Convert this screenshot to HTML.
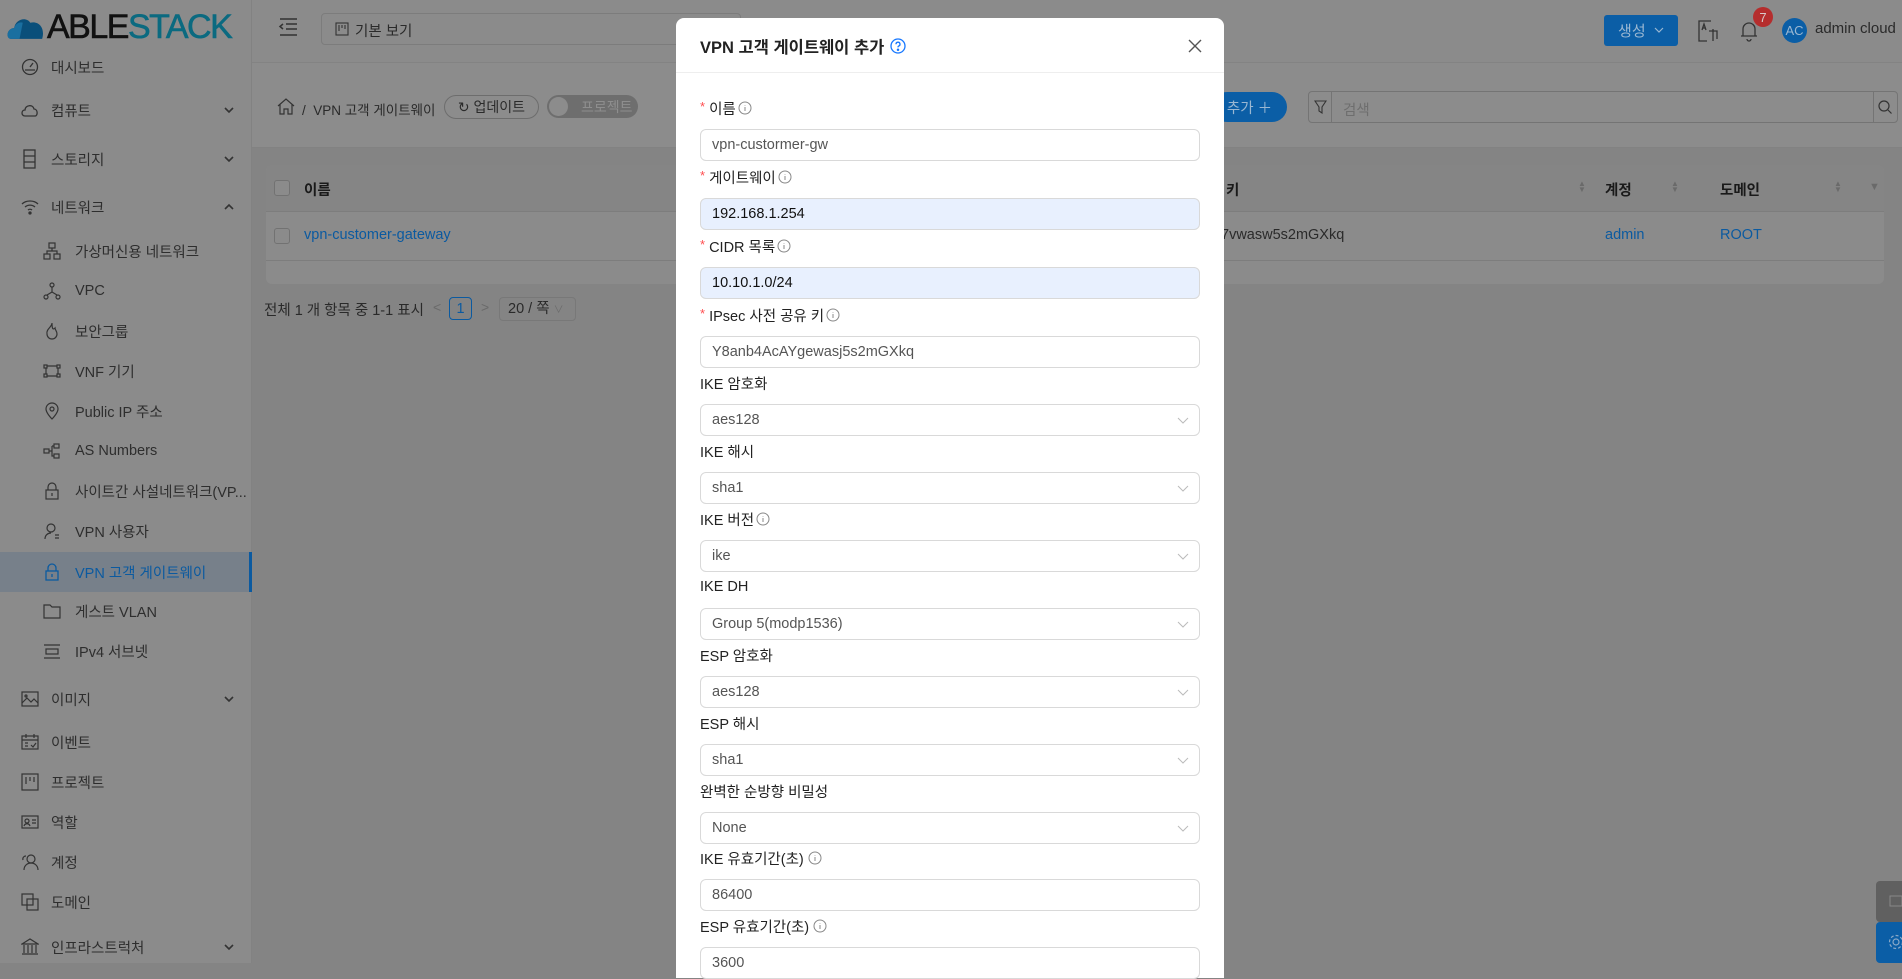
<!DOCTYPE html>
<html><head><meta charset="utf-8">
<style>
*{box-sizing:border-box;margin:0;padding:0}
body{width:1902px;height:963px;overflow:hidden;position:relative;background:#848484;font-family:"Liberation Sans","Noto Sans CJK KR",sans-serif;font-size:14px;color:#262626}
.abs{position:absolute}
#side{left:0;top:0;width:252px;height:963px;background:#8b8b8b;border-right:1px solid #828282}
.mi{position:absolute;left:0;width:252px;height:40px;display:flex;align-items:center;color:#2e2e2e;font-size:14.5px}
.mi svg{position:absolute}
.top svg{left:21px}
.top span{position:absolute;left:51px}
.sub svg{left:43px}
.sub span{position:absolute;left:75px}
.mi svg.chev{left:224px}
#hdr{left:252px;top:0;width:1650px;height:63px;background:#8b8b8b;border-bottom:1px solid #838383}
#bc{left:252px;top:63px;width:1650px;height:85px;background:#8c8c8c;border-bottom:1px solid #828282}
#card{left:266px;top:165px;width:1618px;height:119px;background:#8b8b8b;border-radius:6px}
.modal{left:676px;top:18px;width:548px;height:960px;background:#fff;border-radius:8px 8px 0 0}
.lbl{position:absolute;left:24px;font-size:14.5px;color:#222;display:flex;align-items:center;height:20px}
.req{color:#ff4d4f;margin-right:4px;font-size:13px;position:relative;top:-2px}
.inp{position:absolute;left:24px;width:500px;height:32px;border:1px solid #d9d9d9;border-radius:6px;padding-left:11px;display:flex;align-items:center;font-size:14.5px;color:#555}
.inp.af{background:#e8f0fe;color:#111}
.inp .ar{position:absolute;right:10px;top:9px}
.info{margin-left:2px}
</style></head><body>

<div id="side" class="abs">
 <div class="abs" style="left:6px;top:10px;display:flex;align-items:center">
  <svg width="40" height="28" viewBox="0 0 36 26"><path d="M4 24 C-1 24 0 14 7 14 C8 6 18 3 22 9 C30 7 36 14 33 24 Z" fill="#0a4f7a"/><path d="M4 24 C-1 24 0 14 7 14 C8 10 12 8 15 9 L12 24Z" fill="#1a6fa0"/></svg>
  <span style="font-size:34px;letter-spacing:-1.5px;color:#111;margin-left:1px;line-height:1;-webkit-text-stroke:0.6px #111">ABLE</span><span style="font-size:34px;letter-spacing:-1.5px;color:#0b6a80;line-height:1;-webkit-text-stroke:0.6px #0b6a80">STACK</span>
 </div>
 <div class="mi top" style="top:47px"><svg width="18" height="18" viewBox="0 0 18 18" fill="none" stroke="#333" stroke-width="1.3"><circle cx="9" cy="9" r="7.5"/><path d="M9 9l3-4M4 12h10"/></svg><span>대시보드</span></div>
 <div class="mi top" style="top:90px"><svg width="18" height="18" viewBox="0 0 18 18" fill="none" stroke="#333" stroke-width="1.3"><path d="M4 15C0 15 0 9 4 9 4 4 12 3 13 8 17 8 17 15 14 15Z"/></svg><span>컴퓨트</span><svg class="chev" width="10" height="8" viewBox="0 0 10 8" fill="none" stroke="#333" stroke-width="1.6"><path d="M1 2l4 4 4-4"/></svg></div>
 <div class="mi top" style="top:139px"><svg width="18" height="20" viewBox="0 0 18 20" fill="none" stroke="#333" stroke-width="1.3"><rect x="3" y="1" width="11" height="18"/><path d="M3 7h11M3 13h11"/></svg><span>스토리지</span><svg class="chev" width="10" height="8" viewBox="0 0 10 8" fill="none" stroke="#333" stroke-width="1.6"><path d="M1 2l4 4 4-4"/></svg></div>
 <div class="mi top" style="top:187px"><svg width="18" height="18" viewBox="0 0 18 18" fill="none" stroke="#333" stroke-width="1.3"><path d="M1 6c4-4 12-4 16 0M4 9c3-2.5 7-2.5 10 0M7 12c1-1 3-1 4 0"/><circle cx="9" cy="15" r="1" fill="#333"/></svg><span>네트워크</span><svg class="chev" width="10" height="8" viewBox="0 0 10 8" fill="none" stroke="#333" stroke-width="1.6"><path d="M1 6l4-4 4 4"/></svg></div>
 <div class="mi sub" style="top:231px"><svg width="18" height="18" viewBox="0 0 18 18" fill="none" stroke="#333" stroke-width="1.2"><rect x="6" y="1" width="6" height="5"/><rect x="1" y="12" width="6" height="5"/><rect x="11" y="12" width="6" height="5"/><path d="M9 6v3M4 12V9h10v3"/></svg><span>가상머신용 네트워크</span></div>
 <div class="mi sub" style="top:271px"><svg width="18" height="18" viewBox="0 0 18 18" fill="none" stroke="#333" stroke-width="1.2"><circle cx="9" cy="3" r="2"/><circle cx="3" cy="15" r="2"/><circle cx="15" cy="15" r="2"/><path d="M9 5v5L4 13M9 10l5 3"/></svg><span>VPC</span></div>
 <div class="mi sub" style="top:311px"><svg width="18" height="18" viewBox="0 0 18 18" fill="none" stroke="#333" stroke-width="1.2"><path d="M9 1c0 4-6 6-5 11a5 5 0 0 0 10 0c0-3-2-4-2-6-2 2-3 1-3-5z"/></svg><span>보안그룹</span></div>
 <div class="mi sub" style="top:351px"><svg width="18" height="18" viewBox="0 0 18 18" fill="none" stroke="#333" stroke-width="1.2"><rect x="1" y="3" width="3" height="3"/><rect x="14" y="3" width="3" height="3"/><rect x="1" y="12" width="3" height="3"/><rect x="14" y="12" width="3" height="3"/><path d="M4 4h10M4 14h10M3 6v6M15 6v6"/></svg><span>VNF 기기</span></div>
 <div class="mi sub" style="top:391px"><svg width="18" height="18" viewBox="0 0 18 18" fill="none" stroke="#333" stroke-width="1.2"><path d="M9 17s6-6 6-10A6 6 0 0 0 3 7c0 4 6 10 6 10z"/><circle cx="9" cy="7" r="2"/></svg><span>Public IP 주소</span></div>
 <div class="mi sub" style="top:431px"><svg width="18" height="18" viewBox="0 0 18 18" fill="none" stroke="#333" stroke-width="1.2"><rect x="1" y="7" width="5" height="4"/><rect x="11" y="2" width="5" height="4"/><rect x="11" y="12" width="5" height="4"/><path d="M6 9h3M9 4v10h2M9 4h2"/></svg><span>AS Numbers</span></div>
 <div class="mi sub" style="top:471px"><svg width="18" height="18" viewBox="0 0 18 18" fill="none" stroke="#333" stroke-width="1.2"><rect x="3" y="8" width="12" height="9"/><path d="M5 8V5a4 4 0 0 1 8 0v3M9 11v3"/></svg><span>사이트간 사설네트워크(VP...</span></div>
 <div class="mi sub" style="top:511px"><svg width="18" height="18" viewBox="0 0 18 18" fill="none" stroke="#333" stroke-width="1.2"><circle cx="8" cy="6" r="4"/><path d="M2 17c0-4 3-6 6-6M12 13h4M12 16h4"/></svg><span>VPN 사용자</span></div>
 <div class="mi sub" style="top:552px;background:#77808a;border-right:3px solid #0b5aa0;color:#0b5aa0"><svg width="18" height="18" viewBox="0 0 18 18" fill="none" stroke="#0b5aa0" stroke-width="1.3"><rect x="3" y="8" width="12" height="9"/><path d="M5 8V5a4 4 0 0 1 8 0v3M9 11v3"/></svg><span>VPN 고객 게이트웨이</span></div>
 <div class="mi sub" style="top:591px"><svg width="18" height="18" viewBox="0 0 18 18" fill="none" stroke="#333" stroke-width="1.2"><path d="M1 3h6l2 2h8v11H1z"/></svg><span>게스트 VLAN</span></div>
 <div class="mi sub" style="top:631px"><svg width="18" height="18" viewBox="0 0 18 18" fill="none" stroke="#333" stroke-width="1.2"><path d="M1 3h16M1 16h16"/><rect x="3" y="7" width="12" height="5"/></svg><span>IPv4 서브넷</span></div>
 <div class="mi top" style="top:679px"><svg width="18" height="18" viewBox="0 0 18 18" fill="none" stroke="#333" stroke-width="1.2"><rect x="1" y="2" width="16" height="14"/><path d="M1 13l5-5 4 4 3-3 4 4"/><circle cx="5" cy="6" r="1"/></svg><span>이미지</span><svg class="chev" width="10" height="8" viewBox="0 0 10 8" fill="none" stroke="#333" stroke-width="1.6"><path d="M1 2l4 4 4-4"/></svg></div>
 <div class="mi top" style="top:722px"><svg width="18" height="18" viewBox="0 0 18 18" fill="none" stroke="#333" stroke-width="1.2"><rect x="1" y="3" width="16" height="13"/><path d="M1 7h16M5 1v4M13 1v4M4 10h3M4 13h3M10 12l2 2 3-4"/></svg><span>이벤트</span></div>
 <div class="mi top" style="top:762px"><svg width="18" height="18" viewBox="0 0 18 18" fill="none" stroke="#333" stroke-width="1.2"><rect x="1" y="1" width="16" height="16"/><path d="M5 4v7M9 4v4M13 4v5"/></svg><span>프로젝트</span></div>
 <div class="mi top" style="top:802px"><svg width="18" height="18" viewBox="0 0 18 18" fill="none" stroke="#333" stroke-width="1.2"><rect x="1" y="3" width="16" height="12"/><circle cx="6" cy="8" r="2"/><path d="M3 13c1-3 5-3 6 0M11 7h4M11 10h4"/></svg><span>역할</span></div>
 <div class="mi top" style="top:842px"><svg width="18" height="18" viewBox="0 0 18 18" fill="none" stroke="#333" stroke-width="1.2"><circle cx="10" cy="6" r="4"/><path d="M3 17c0-4 3-7 7-7s7 3 7 7M5 3a3 3 0 0 0-3 4"/></svg><span>계정</span></div>
 <div class="mi top" style="top:882px"><svg width="18" height="18" viewBox="0 0 18 18" fill="none" stroke="#333" stroke-width="1.2"><rect x="1" y="1" width="11" height="11"/><rect x="6" y="6" width="11" height="11"/></svg><span>도메인</span></div>
 <div class="mi top" style="top:927px"><svg width="18" height="18" viewBox="0 0 18 18" fill="none" stroke="#333" stroke-width="1.2"><path d="M1 6L9 1l8 5zM3 7v8M7 7v8M11 7v8M15 7v8M1 16h16"/></svg><span>인프라스트럭처</span><svg class="chev" width="10" height="8" viewBox="0 0 10 8" fill="none" stroke="#333" stroke-width="1.6"><path d="M1 2l4 4 4-4"/></svg></div>
</div>

<div id="hdr" class="abs">
 <svg class="abs" style="left:26px;top:18px" width="20" height="18" viewBox="0 0 20 18" fill="none" stroke="#333" stroke-width="1.5"><path d="M2 1h17M8 6h11M8 11h11M2 17h17M5 6L2 8.5 5 11"/></svg>
 <div class="abs" style="left:69px;top:13px;width:420px;height:32px;border:1px solid #7c7c7c;border-radius:4px"></div>
 <svg class="abs" style="left:83px;top:22px" width="14" height="14" viewBox="0 0 14 14" fill="none" stroke="#333" stroke-width="1.1"><rect x="1" y="1" width="12" height="12"/><path d="M4 3v6M7 3v3M10 3v4"/></svg>
 <span class="abs" style="left:103px;top:20px;font-size:14.5px;color:#2a2a2a">기본 보기</span>
 <div class="abs" style="left:1352px;top:15px;width:74px;height:31px;background:#0b5ea6;border-radius:3px;color:#9ab7d2;font-size:15px;display:flex;align-items:center;justify-content:center">생성 &nbsp;<svg width="10" height="7" viewBox="0 0 10 7" fill="none" stroke="#9ab7d2" stroke-width="1.2"><path d="M1 1l4 4 4-4"/></svg></div>
 <svg class="abs" style="left:1446px;top:20px" width="20" height="22" viewBox="0 0 20 22" fill="none" stroke="#333" stroke-width="1.3"><path d="M13 1H1v20h8"/><path d="M4 10l2-6 2 6M5 8h2"/><path d="M11 11h8v8M15 9v12"/></svg>
 <svg class="abs" style="left:1488px;top:20px" width="18" height="22" viewBox="0 0 18 22" fill="none" stroke="#333" stroke-width="1.3"><path d="M3 16V9a6 6 0 0 1 12 0v7H1h16M7 19a2 2 0 0 0 4 0"/></svg>
 <div class="abs" style="left:1501px;top:7px;width:20px;height:20px;border-radius:50%;background:#b52d2d;color:#d8c8c8;font-size:13px;display:flex;align-items:center;justify-content:center">7</div>
 <div class="abs" style="left:1530px;top:18px;width:25px;height:25px;border-radius:50%;background:#0b5ea6;color:#9ab7d2;font-size:13px;display:flex;align-items:center;justify-content:center">AC</div>
 <span class="abs" style="left:1563px;top:20px;font-size:15px;color:#2a2a2a">admin cloud</span>
</div>

<div id="bc" class="abs">
 <svg class="abs" style="left:25px;top:35px" width="18" height="17" viewBox="0 0 18 17" fill="none" stroke="#333" stroke-width="1.2"><path d="M1 8L9 1l8 7M3 6v10h4v-5h4v5h4V6"/></svg>
 <span class="abs" style="left:50px;top:36px;font-size:13.5px;color:#2a2a2a">/&nbsp;&nbsp;VPN 고객 게이트웨이</span>
 <div class="abs" style="left:192px;top:32px;width:95px;height:24px;border:1px solid #6d6d6d;border-radius:12px;font-size:14px;color:#2a2a2a;display:flex;align-items:center;justify-content:center">&#8635;&nbsp;업데이트</div>
 <div class="abs" style="left:295px;top:32px;width:91px;height:23px;border-radius:12px;background:#6e6e6e;font-size:14px;color:#8e8e8e;display:flex;align-items:center;padding-left:34px">프로젝트<div class="abs" style="left:2px;top:2px;width:19px;height:19px;border-radius:50%;background:#8c8c8c"></div></div>
 <div class="abs" style="left:960px;top:29px;width:75px;height:30px;background:#0b5ea6;border-radius:15px;color:#9ab7d2;font-size:14.5px;display:flex;align-items:center;justify-content:center">추가 ＋</div>
 <div class="abs" style="left:1056px;top:28px;width:590px;height:32px;border:1px solid #747474;border-radius:4px">
  <div class="abs" style="left:0;top:0;width:23px;height:30px;border-right:1px solid #747474"></div>
  <svg class="abs" style="left:5px;top:8px" width="13" height="14" viewBox="0 0 13 14" fill="none" stroke="#333" stroke-width="1.1"><path d="M1 1h11L8 7v6L5 11V7z"/></svg>
  <span class="abs" style="left:34px;top:7px;font-size:14.5px;color:#6e6e6e">검색</span>
  <div class="abs" style="right:0;top:0;width:24px;height:30px;border-left:1px solid #747474"></div>
  <svg class="abs" style="right:5px;top:8px" width="14" height="14" viewBox="0 0 14 14" fill="none" stroke="#333" stroke-width="1.2"><circle cx="6" cy="6" r="5"/><path d="M10 10l3.5 3.5"/></svg>
 </div>
</div>

<div id="card" class="abs">
 <div class="abs" style="left:0;top:0;width:1618px;height:47px;background:#858585;border-bottom:1px solid #7d7d7d;border-radius:6px 6px 0 0"></div>
 <div class="abs" style="left:8px;top:15px;width:16px;height:16px;border:1px solid #727272;border-radius:3px;background:#8b8b8b"></div>
 <span class="abs" style="left:38px;top:14px;font-size:14.5px;font-weight:bold;color:#1a1a1a">이름</span>
 <span class="abs" style="left:960px;top:14px;font-size:14.5px;font-weight:bold;color:#1a1a1a">키</span>
 <span class="abs" style="left:1312px;top:16px;font-size:8px;color:#6a6a6a;line-height:6px">▲<br>▼</span>
 <span class="abs" style="left:1339px;top:14px;font-size:14.5px;font-weight:bold;color:#1a1a1a">계정</span>
 <span class="abs" style="left:1405px;top:16px;font-size:8px;color:#6a6a6a;line-height:6px">▲<br>▼</span>
 <span class="abs" style="left:1454px;top:14px;font-size:14.5px;font-weight:bold;color:#1a1a1a">도메인</span>
 <span class="abs" style="left:1568px;top:16px;font-size:8px;color:#6a6a6a;line-height:6px">▲<br>▼</span>
 <span class="abs" style="left:1603px;top:16px;font-size:11px;color:#6a6a6a">▼</span>
 <div class="abs" style="left:0;top:95px;width:1618px;height:1px;background:#7d7d7d"></div>
 <div class="abs" style="left:8px;top:63px;width:16px;height:16px;border:1px solid #727272;border-radius:3px"></div>
 <span class="abs" style="left:38px;top:62px;font-size:14.5px;color:#0b5aa0">vpn-customer-gateway</span>
 <span class="abs" style="left:955px;top:62px;font-size:14.5px;color:#2a2a2a">7vwasw5s2mGXkq</span>
 <span class="abs" style="left:1339px;top:62px;font-size:14.5px;color:#0b5aa0">admin</span>
 <span class="abs" style="left:1454px;top:62px;font-size:14.5px;color:#0b5aa0">ROOT</span>
</div>

<span class="abs" style="left:264px;top:299px;font-size:14.5px;color:#2a2a2a">전체 1 개 항목 중 1-1 표시</span>
<span class="abs" style="left:433px;top:299px;font-size:14px;color:#6a6a6a">&lt;</span>
<div class="abs" style="left:449px;top:297px;width:23px;height:23px;border:1px solid #0b5aa0;border-radius:4px;color:#0b5aa0;font-size:14.5px;display:flex;align-items:center;justify-content:center">1</div>
<span class="abs" style="left:481px;top:299px;font-size:14px;color:#6a6a6a">&gt;</span>
<div class="abs" style="left:499px;top:297px;width:77px;height:24px;border:1px solid #787878;border-radius:4px;font-size:14.5px;color:#2a2a2a;padding-left:8px;line-height:22px">20 / 쪽 <span style="font-size:10px;color:#6a6a6a">&#8744;</span></div>

<div class="abs" style="left:1876px;top:881px;width:30px;height:41px;background:#606060;border-radius:4px 0 0 4px"></div>
<svg class="abs" style="left:1889px;top:894px" width="13" height="13" viewBox="0 0 13 13" fill="none" stroke="#888" stroke-width="1"><rect x="1" y="2" width="12" height="10"/></svg>
<div class="abs" style="left:1876px;top:922px;width:30px;height:41px;background:#0b5ea6;border-radius:4px 0 0 4px"></div>
<svg class="abs" style="left:1888px;top:934px" width="16" height="16" viewBox="0 0 16 16" fill="none" stroke="#8aa9c8" stroke-width="1.2"><circle cx="8" cy="8" r="3"/><circle cx="8" cy="8" r="6.5" stroke-dasharray="3 2"/></svg>

<div class="abs modal">
 <div class="abs" style="left:24px;top:16px;display:flex;align-items:center;font-size:16.5px;font-weight:bold;color:#222">VPN 고객 게이트웨이 추가<svg style="margin-left:6px" width="16" height="16" viewBox="0 0 16 16" fill="none" stroke="#1677ff" stroke-width="1.3"><circle cx="8" cy="8" r="7"/><path d="M6 6.2a2 2 0 1 1 2.6 1.9c-.5.2-.6.6-.6 1.3"/><circle cx="8" cy="11.8" r=".6" fill="#1677ff"/></svg></div>
 <svg class="abs" style="left:512px;top:21px" width="14" height="14" viewBox="0 0 14 14" stroke="#555" stroke-width="1.4"><path d="M1 1l12 12M13 1L1 13"/></svg>
 <div class="abs" style="left:0;top:54px;width:548px;height:1px;background:#eee"></div>

 <div class="lbl" style="top:80px"><span class="req">*</span>이름<svg class="info" width="14" height="14" viewBox="0 0 14 14" fill="none" stroke="#888" stroke-width="1"><circle cx="7" cy="7" r="6"/><path d="M7 6v4M7 4v.5"/></svg></div>
 <div class="inp" style="top:111px">vpn-custormer-gw</div>
 <div class="lbl" style="top:149px"><span class="req">*</span>게이트웨이<svg class="info" width="14" height="14" viewBox="0 0 14 14" fill="none" stroke="#888" stroke-width="1"><circle cx="7" cy="7" r="6"/><path d="M7 6v4M7 4v.5"/></svg></div>
 <div class="inp af" style="top:180px">192.168.1.254</div>
 <div class="lbl" style="top:218px"><span class="req">*</span>CIDR 목록<svg class="info" width="14" height="14" viewBox="0 0 14 14" fill="none" stroke="#888" stroke-width="1"><circle cx="7" cy="7" r="6"/><path d="M7 6v4M7 4v.5"/></svg></div>
 <div class="inp af" style="top:249px">10.10.1.0/24</div>
 <div class="lbl" style="top:287px"><span class="req">*</span>IPsec 사전 공유 키<svg class="info" width="14" height="14" viewBox="0 0 14 14" fill="none" stroke="#888" stroke-width="1"><circle cx="7" cy="7" r="6"/><path d="M7 6v4M7 4v.5"/></svg></div>
 <div class="inp" style="top:318px">Y8anb4AcAYgewasj5s2mGXkq</div>
 <div class="lbl" style="top:355px">IKE 암호화</div>
 <div class="inp" style="top:386px">aes128<svg class="ar" width="12" height="12" viewBox="0 0 12 12" fill="none" stroke="#bbb"><path d="M1 4l5 5 5-5"/></svg></div>
 <div class="lbl" style="top:423px">IKE 해시</div>
 <div class="inp" style="top:454px">sha1<svg class="ar" width="12" height="12" viewBox="0 0 12 12" fill="none" stroke="#bbb"><path d="M1 4l5 5 5-5"/></svg></div>
 <div class="lbl" style="top:491px">IKE 버전<svg class="info" width="14" height="14" viewBox="0 0 14 14" fill="none" stroke="#888" stroke-width="1"><circle cx="7" cy="7" r="6"/><path d="M7 6v4M7 4v.5"/></svg></div>
 <div class="inp" style="top:522px">ike<svg class="ar" width="12" height="12" viewBox="0 0 12 12" fill="none" stroke="#bbb"><path d="M1 4l5 5 5-5"/></svg></div>
 <div class="lbl" style="top:559px">IKE DH</div>
 <div class="inp" style="top:590px">Group 5(modp1536)<svg class="ar" width="12" height="12" viewBox="0 0 12 12" fill="none" stroke="#bbb"><path d="M1 4l5 5 5-5"/></svg></div>
 <div class="lbl" style="top:627px">ESP 암호화</div>
 <div class="inp" style="top:658px">aes128<svg class="ar" width="12" height="12" viewBox="0 0 12 12" fill="none" stroke="#bbb"><path d="M1 4l5 5 5-5"/></svg></div>
 <div class="lbl" style="top:695px">ESP 해시</div>
 <div class="inp" style="top:726px">sha1<svg class="ar" width="12" height="12" viewBox="0 0 12 12" fill="none" stroke="#bbb"><path d="M1 4l5 5 5-5"/></svg></div>
 <div class="lbl" style="top:763px">완벽한 순방향 비밀성</div>
 <div class="inp" style="top:794px">None<svg class="ar" width="12" height="12" viewBox="0 0 12 12" fill="none" stroke="#bbb"><path d="M1 4l5 5 5-5"/></svg></div>
 <div class="lbl" style="top:830px">IKE 유효기간(초)<svg class="info" style="margin-left:4px" width="14" height="14" viewBox="0 0 14 14" fill="none" stroke="#888" stroke-width="1"><circle cx="7" cy="7" r="6"/><path d="M7 6v4M7 4v.5"/></svg></div>
 <div class="inp" style="top:861px">86400</div>
 <div class="lbl" style="top:898px">ESP 유효기간(초)<svg class="info" style="margin-left:4px" width="14" height="14" viewBox="0 0 14 14" fill="none" stroke="#888" stroke-width="1"><circle cx="7" cy="7" r="6"/><path d="M7 6v4M7 4v.5"/></svg></div>
 <div class="inp" style="top:929px;align-items:flex-start;padding-top:7px">3600</div>
</div>
</body></html>
